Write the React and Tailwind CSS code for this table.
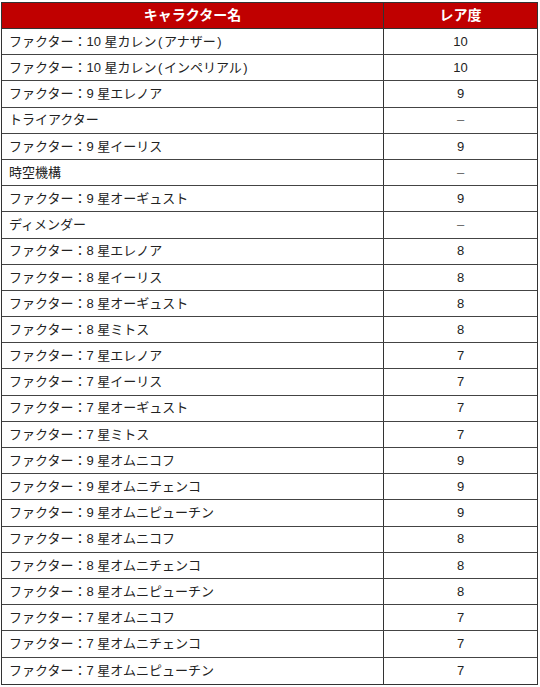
const rows = [
  ["ファクター：10 星カレン(アナザー)", "10"],
  ["ファクター：10 星カレン(インペリアル)", "10"],
  ["ファクター：9 星エレノア", "9"],
  ["トライアクター", "–"],
  ["ファクター：9 星イーリス", "9"],
  ["時空機構", "–"],
  ["ファクター：9 星オーギュスト", "9"],
  ["ディメンダー", "–"],
  ["ファクター：8 星エレノア", "8"],
  ["ファクター：8 星イーリス", "8"],
  ["ファクター：8 星オーギュスト", "8"],
  ["ファクター：8 星ミトス", "8"],
  ["ファクター：7 星エレノア", "7"],
  ["ファクター：7 星イーリス", "7"],
  ["ファクター：7 星オーギュスト", "7"],
  ["ファクター：7 星ミトス", "7"],
  ["ファクター：9 星オムニコフ", "9"],
  ["ファクター：9 星オムニチェンコ", "9"],
  ["ファクター：9 星オムニピューチン", "9"],
  ["ファクター：8 星オムニコフ", "8"],
  ["ファクター：8 星オムニチェンコ", "8"],
  ["ファクター：8 星オムニピューチン", "8"],
  ["ファクター：7 星オムニコフ", "7"],
  ["ファクター：7 星オムニチェンコ", "7"],
  ["ファクター：7 星オムニピューチン", "7"],
];

function Name({ text }) {
  const parts = text.split(/([()])/);
  return (
    <span>
      {parts.map((p, i) =>
        p === "(" || p === ")" ? (
          <span key={i} className="inline-block mx-[1.5px]">{p}</span>
        ) : (
          <span key={i}>{p}</span>
        )
      )}
    </span>
  );
}

export default function App() {
  return (
    <div className="w-[540px] h-[687px] bg-white pt-[2px] pl-[1px] font-['Liberation_Sans','Noto_Sans_CJK_JP',sans-serif] text-[#222]">
      <div className="w-[537px] border border-[#333]">
        <div className="flex h-[26px] bg-[#c00000] text-white font-bold text-[14px] border-b border-[#333]">
          <div className="w-[382px] flex items-center justify-center border-r border-[#333]">キャラクター名</div>
          <div className="flex-1 flex items-center justify-center">レア度</div>
        </div>
        {rows.map(([name, r], i) => (
          <div key={i} className={"flex h-[26.2px] text-[13px] " + (i < rows.length - 1 ? "border-b border-[#444]" : "")}>
            <div className="w-[382px] flex items-center pl-[7px] border-r border-[#333]">
              <Name text={name} />
            </div>
            <div className={"flex-1 flex items-center justify-center " + (r === "–" ? "text-[#666]" : "")}>{r}</div>
          </div>
        ))}
      </div>
    </div>
  );
}
